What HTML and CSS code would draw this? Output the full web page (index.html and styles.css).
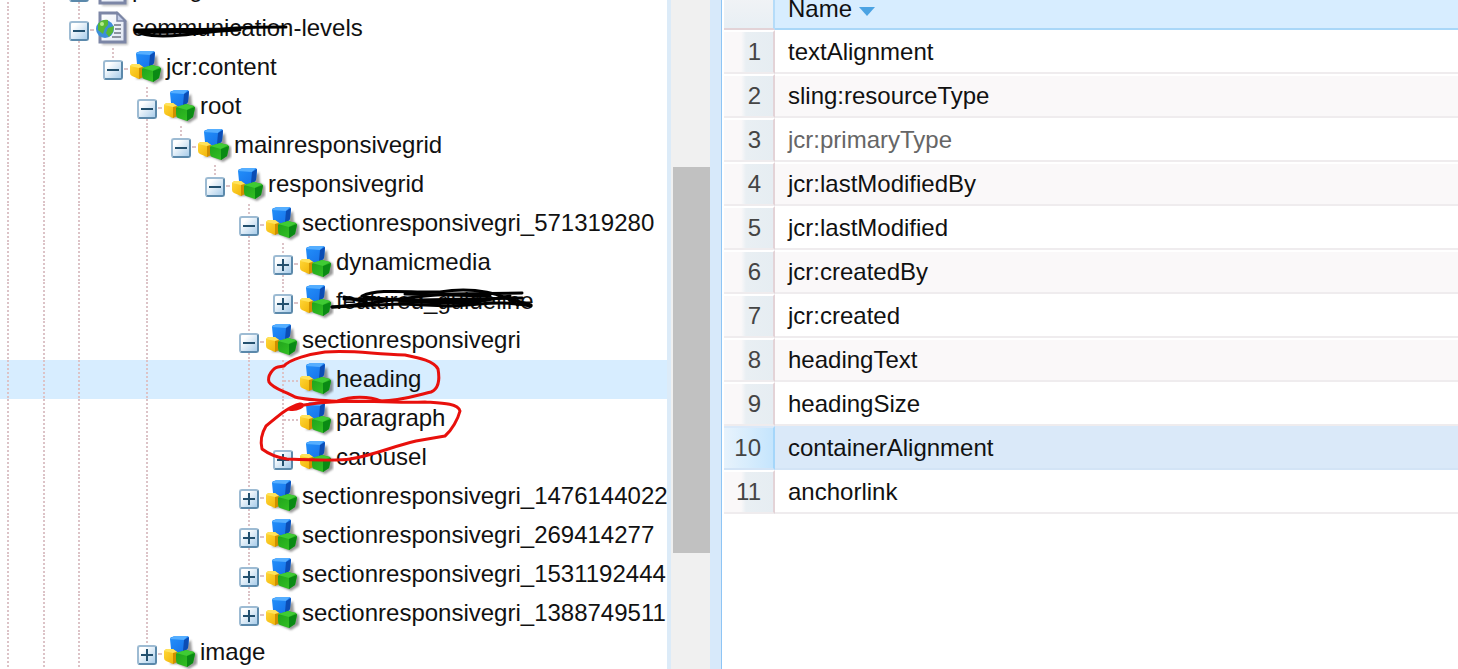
FILE: index.html
```html
<!DOCTYPE html>
<html lang="en">
<head>
    <meta charset="UTF-8">
    <meta name="viewport" content="width=device-width, initial-scale=1.0">
    <title>CRXDE Lite</title>
    <link rel="stylesheet" href="styles.css">
</head>
<body>
    <!-- shared icons -->
    <svg class="sprite" aria-hidden="true">
        <defs>
            <linearGradient id="blueFront" x1="0" y1="0" x2="1" y2="1"><stop offset="0" stop-color="#2391fb"/><stop offset="1" stop-color="#1670e8"/></linearGradient>
            <linearGradient id="yellowFront" x1="0" y1="0" x2="1" y2="1"><stop offset="0" stop-color="#ffd83a"/><stop offset="1" stop-color="#f0b000"/></linearGradient>
            <linearGradient id="greenFront" x1="0" y1="0" x2="1" y2="1"><stop offset="0" stop-color="#1fa01c"/><stop offset="1" stop-color="#37c824"/></linearGradient>
            <linearGradient id="pageFill" x1="0" y1="0" x2="1" y2="1"><stop offset="0" stop-color="#ffffff"/><stop offset="1" stop-color="#dfe6f3"/></linearGradient>
        </defs>
        <symbol id="cubes" viewBox="0 0 34 36">
            <path d="M6 29 L14 29 L25 34 L33 29 L33 19 L28 16 L27 5 L12 18 Z" fill="#333" opacity="0.5" class="soft"/>
            <path d="M6 4 Q6 2 8 2 L11 1 L23 1 Q25 1 25 3 L24 13 Q23 15 20 17 L10 17 Q7 16 7 14 Z" fill="url(#blueFront)"/>
            <path d="M6 4 L10 1 L24 1 L20 5 Z" fill="#55aeff"/>
            <path d="M20 5 L25 2 L24 13 L20 17 L19 16 Z" fill="#0c4db4"/>
            <path d="M0 16 Q1 14 3 14 L9 14 L13 17 L12 27 L9 29 L2 26 Q0 25 0 23 Z" fill="url(#yellowFront)"/>
            <path d="M0 16 L3 14 L9 14 L13 17 L9 18 Z" fill="#ffe35c"/>
            <path d="M9 18 L13 17 L13 27 L9 29 Z" fill="#cf8f00"/>
            <path d="M12 19 Q13 17 16 17 L22 15 L30 17 Q31 18 31 20 L29 28 L23 32 L14 29 Q12 28 12 25 Z" fill="url(#greenFront)"/>
            <path d="M12 18 L22 15 L30 17 L23 21 Z" fill="#3fcb34"/>
            <path d="M23 21 L31 18 L29 28 L23 32 Z" fill="#0a8a14"/>
        </symbol>
        <symbol id="page" viewBox="0 0 34 36">
            <path d="M6 4 H24 L32 11 V34 H6 Z" fill="#555" opacity="0.35" class="soft"/>
            <path d="M4 2 H21 L29 10 V31 H4 Z" fill="url(#pageFill)" stroke="#7c86a6" stroke-width="3"/>
            <path d="M21 2 V10 H29 Z" fill="#c5cfe8" stroke="#7c86a6" stroke-width="1.5"/>
            <path d="M18 14 H25 M19 18 H25 M18 22 H25 M16 26 H25" stroke="#8c93a0" stroke-width="2"/>
            <circle cx="9" cy="18" r="9" fill="#3d8ed8"/>
            <path d="M2 13 Q6 8 12 9 L12 14 L9 17 L7 23 L2 19 Z M12 17 L18 15 L17 21 L13 26 L10 22 Z" fill="#58b835"/>
            <circle cx="6" cy="13" r="2" fill="#b4ec8c"/>
        </symbol>
    </svg>

    <div class="workspace">
        <section class="tree-pane">
            <div class="tree" id="tree"></div>
            <div class="scrollbar"><div class="thumb"></div></div>
            <!-- pen marks over the tree -->
            <svg class="marks" width="668" height="669" viewBox="0 0 668 669" aria-hidden="true">
                <g class="pen black">
                    <path d="M136 30 C160 29 190 30 222 29 C245 27 265 27 286 27"/>
                    <path d="M135 30 C139 36 160 37 182 35 C205 33 220 30 240 30 C210 31 160 33 136 32"/>
                    <path d="M332 307 C365 305 410 296 450 294 L522 293"/>
                    <path d="M362 296 C380 288 410 293 440 292 C465 288 490 291 510 299 L531 305"/>
                    <path d="M332 307 L400 304 L450 306 C480 305 500 300 531 306"/>
                    <path d="M344 299 L420 300 L522 298"/>
                    <path d="M364 297 C400 300 420 304 470 303 L510 296"/>
                    <path d="M405 294 L490 296 M410 302 L480 301"/>
                    <path d="M344 297 L366 302 M505 297 L518 305"/>
                </g>
                <g class="pen red">
                    <path d="M284 366 C290 359 310 354 325 352 C355 350 370 354 405 355 C420 358 434 361 438 369 C440 380 438 389 431 392 C415 396 400 401 380 401 C350 402 310 401 295 397 C285 391 273 389 269 382 C267 376 273 368 278 367 Z"/>
                    <path d="M300 406 C294 404 288 410 289 409 C296 411 308 405 300 404 C287 407 276 418 266 426 C260 436 261 445 262 449 C270 455 280 458 287 459 C310 460 340 461 350 459 C375 455 390 447 416 441 L445 436 C452 430 458 419 460 411 C458 403 440 403 425 402 C395 403 370 401 350 401 C325 402 310 403 290 408"/>
                    <path d="M338 401 C350 396 370 396 381 401"/>
                </g>
            </svg>
        </section>

        <section class="grid-pane">
            <table class="props">
                <thead>
                    <tr><th class="num"></th><th class="name">Name <span class="sort"></span></th></tr>
                </thead>
                <tbody>
                    <tr><td class="num">1</td><td class="name">textAlignment</td></tr>
                    <tr><td class="num">2</td><td class="name">sling:resourceType</td></tr>
                    <tr class="protected"><td class="num">3</td><td class="name">jcr:primaryType</td></tr>
                    <tr><td class="num">4</td><td class="name">jcr:lastModifiedBy</td></tr>
                    <tr><td class="num">5</td><td class="name">jcr:lastModified</td></tr>
                    <tr><td class="num">6</td><td class="name">jcr:createdBy</td></tr>
                    <tr><td class="num">7</td><td class="name">jcr:created</td></tr>
                    <tr><td class="num">8</td><td class="name">headingText</td></tr>
                    <tr><td class="num">9</td><td class="name">headingSize</td></tr>
                    <tr class="selected"><td class="num">10</td><td class="name">containerAlignment</td></tr>
                    <tr><td class="num">11</td><td class="name">anchorlink</td></tr>
                </tbody>
            </table>
        </section>
    </div>

    <script>
        // indent: '|' draws a guide line, '.' is an empty cell
        // joint: 'plus' / 'minus' are expanders, 'leaf' is a plain elbow
        const nodes = [
            { indent: '||', joint: 'plus', icon: 'page', label: 'pricing' },
            { indent: '||', joint: 'minus', icon: 'page', label: 'communication-levels' },
            { indent: '|||', joint: 'minus', last: true, label: 'jcr:content' },
            { indent: '|||.', joint: 'minus', label: 'root' },
            { indent: '|||.|', joint: 'minus', last: true, label: 'mainresponsivegrid' },
            { indent: '|||.|.', joint: 'minus', last: true, label: 'responsivegrid' },
            { indent: '|||.|..', joint: 'minus', label: 'sectionresponsivegri_571319280' },
            { indent: '|||.|..|', joint: 'plus', label: 'dynamicmedia' },
            { indent: '|||.|..|', joint: 'plus', last: true, label: 'featured_guideline' },
            { indent: '|||.|..', joint: 'minus', label: 'sectionresponsivegri' },
            { indent: '|||.|..|', joint: 'leaf', label: 'heading', selected: true },
            { indent: '|||.|..|', joint: 'leaf', label: 'paragraph' },
            { indent: '|||.|..|', joint: 'plus', last: true, label: 'carousel' },
            { indent: '|||.|..', joint: 'plus', label: 'sectionresponsivegri_1476144022' },
            { indent: '|||.|..', joint: 'plus', label: 'sectionresponsivegri_269414277' },
            { indent: '|||.|..', joint: 'plus', label: 'sectionresponsivegri_1531192444' },
            { indent: '|||.|..', joint: 'plus', last: true, label: 'sectionresponsivegri_1388749511' },
            { indent: '|||.', joint: 'plus', last: true, label: 'image' }
        ];

        function renderNode(node) {
            let html = '<div class="node' + (node.selected ? ' selected' : '') + '">';
            for (let cell of node.indent) {
                html += '<span class="cell' + (cell === '|' ? ' line' : '') + '"></span>';
            }
            html += '<span class="cell joint line ' + node.joint + (node.last ? ' last' : '') + '">';
            if (node.joint !== 'leaf') {
                html += '<button class="expander" aria-label="Toggle ' + node.label + '"></button>';
            }
            html += '</span>';
            html += '<svg class="icon"><use href="#' + (node.icon || 'cubes') + '"/></svg>';
            html += '<a href="#" class="label">' + node.label + '</a></div>';
            return html;
        }

        document.getElementById('tree').innerHTML = nodes.map(renderNode).join('');
    </script>
</body>
</html>
```
FILE: styles.css
```css
* {
    box-sizing: border-box;
}

body {
    margin: 0;
    font-family: 'Liberation Sans', Arial, sans-serif;
    font-size: 24px;
    color: #111;
    background-color: #fff;
}

.sprite {
    position: absolute;
    width: 0;
    height: 0;
}

.soft {
    filter: blur(1px);
}

.workspace {
    display: grid;
    grid-template-columns: 722fr 736fr;
    height: 100vh;
    overflow: hidden;
}

/* Repository tree */
.tree-pane {
    position: relative;
    display: flex;
    min-width: 0;
    overflow: hidden;
    border-right: 1px solid #8ec5f5;
}

.tree {
    flex: 1;
    min-width: 0;
    margin-top: -30px;
    overflow: hidden;
}

.node {
    display: flex;
    align-items: center;
    height: 39px;
    white-space: nowrap;
}

.node.selected {
    background-color: #d7edff;
}

.cell {
    position: relative;
    flex: none;
    width: 34px;
    height: 39px;
}

/* the two outermost levels are wider, the first one is cut by the pane edge */
.cell:nth-child(-n+2) {
    width: 36px;
}

.cell:first-child {
    margin-left: -10px;
}

.line {
    background: repeating-linear-gradient(to bottom, #dcc3c7 0, #dcc3c7 2px, transparent 2px, transparent 4px) center / 2px 100% no-repeat;
}

.line.last {
    background-size: 2px 50%;
    background-position: center top;
}

.joint {
    display: flex;
    align-items: center;
    justify-content: center;
    padding-top: 4px;
}

.joint::after {
    content: "";
    position: absolute;
    left: 28px;
    top: 20px;
    width: 4px;
    border-top: 2px dotted #dcc3c7;
}

.leaf::after {
    left: 18px;
    width: 14px;
}

.expander {
    position: relative;
    width: 20px;
    height: 20px;
    padding: 0;
    border: 2px solid #5b89ab;
    border-top-color: #9dbbd3;
    border-left-color: #9dbbd3;
    border-radius: 3px;
    background: linear-gradient(135deg, #fff 20%, #a9cdea);
    cursor: pointer;
}

.expander::before,
.plus .expander::after {
    content: "";
    position: absolute;
    left: 2px;
    top: 7px;
    width: 12px;
    height: 2px;
    background-color: #23506e;
}

.plus .expander::after {
    transform: rotate(90deg);
}

.icon {
    flex: none;
    width: 34px;
    height: 36px;
    margin-right: 2px;
}

.label {
    padding-bottom: 2px;
    color: inherit;
    text-decoration: none;
}

.scrollbar {
    width: 54px;
    padding: 167px 0 116px 2px;
    border-left: 4px solid #dcebf8;
    border-right: 11px solid #d7e9fa;
    background-color: #f0f0f0;
}

.thumb {
    height: 100%;
    background-color: #c1c1c1;
}

.marks {
    position: absolute;
    left: 0;
    top: 0;
    pointer-events: none;
}

.pen {
    fill: none;
    stroke-width: 3;
    stroke-linecap: round;
    stroke-linejoin: round;
}

.black {
    stroke: #000;
}

.red {
    stroke: #e8100c;
}

/* Properties grid */
.grid-pane {
    min-width: 0;
    padding-left: 2px;
    overflow: hidden;
}

.props {
    width: 100%;
    margin-top: -14px;
    border-collapse: separate;
    border-spacing: 0;
    table-layout: fixed;
}

.props th,
.props td {
    height: 44px;
    padding: 0;
    border-bottom: 2px solid #efecee;
}

.props .num {
    width: 51px;
    padding-right: 12px;
    border-right: 2px solid #e3d3d7;
    text-align: right;
    color: #444;
    background: linear-gradient(to right, #faf8f9 35%, #e9eff3 45%, #e6edf2);
    background-clip: padding-box;
}

.props .name {
    padding-left: 13px;
    text-align: left;
    font-weight: normal;
    border-top: 2px solid #fff;
}

.props td.num {
    border-top: 2px solid #fff;
}

.props th.num {
    border-color: #e3d3d7;
    border-right-color: #b5dcf9;
    background: linear-gradient(#f4f4f6, #e8eff4);
}

.props th.name {
    padding-top: 4px;
    border-top: 0;
    border-bottom-color: #a9d7f8;
    background-color: #d7edff;
}

.sort {
    display: inline-block;
    border: 8px solid transparent;
    border-top: 9px solid #4ba3e3;
    border-bottom: 0;
    vertical-align: 1px;
}

.props tbody tr:nth-child(even) .name {
    background-color: #faf8f9;
}

.props .protected .name {
    color: #666;
}

.props tbody tr.selected .name {
    background-color: #dae9f9;
    border-bottom-color: #d3e4f6;
}

.props .selected .num {
    border-right-color: #a5d6fa;
    border-bottom-color: #d3e4f6;
    background: linear-gradient(to right, #e8f3fc, #c5e5fd);
}

.props tbody tr.selected td {
    border-top-color: #dae9f9;
}
```
